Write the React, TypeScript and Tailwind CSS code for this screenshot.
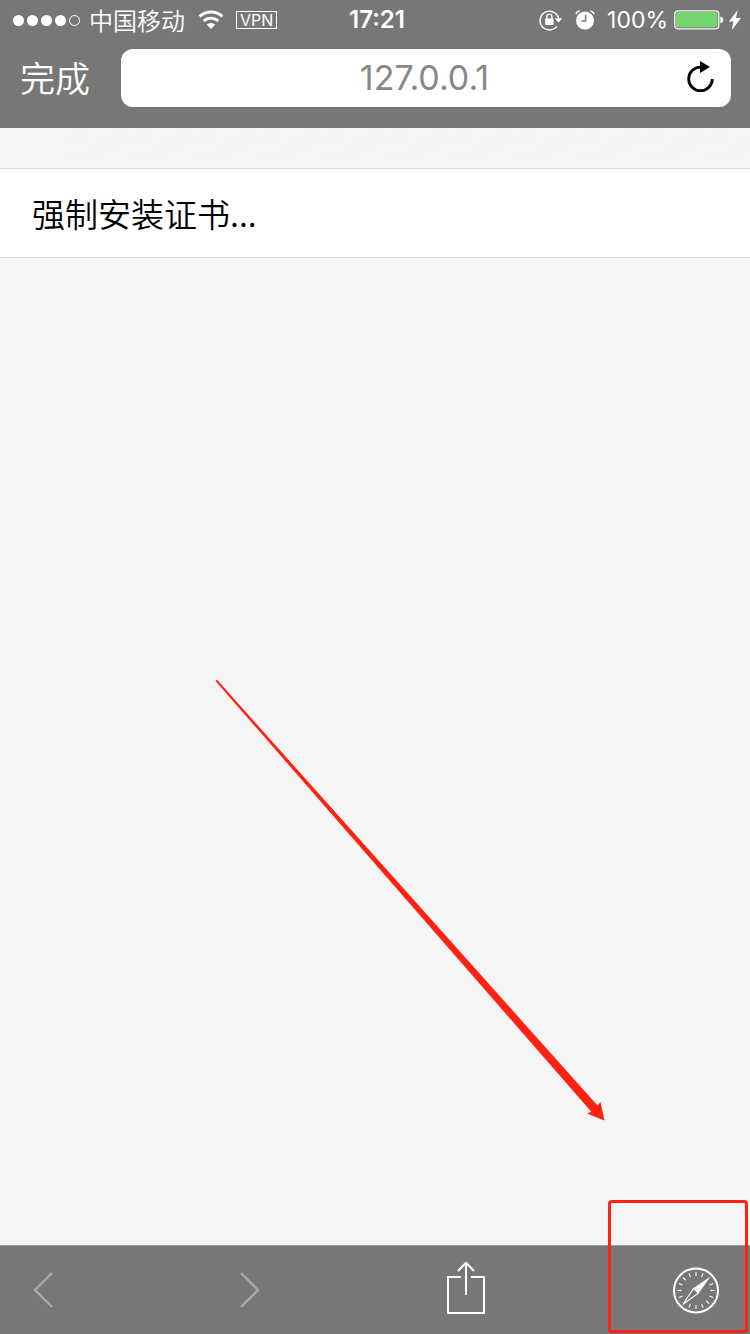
import React from "react";

const latin = "font-['Inter','Noto_Sans_CJK_SC',sans-serif]";
const cjk = "font-['Noto_Sans_CJK_SC',sans-serif]";

function Wifi() {
  return (
    <svg width="26" height="20" viewBox="0 0 26 20" fill="none" stroke="#fff" aria-hidden="true">
      <path d="M1.6 6.6a16.4 16.4 0 0 1 22.8 0" strokeWidth="2.8" />
      <path d="M5.8 11a10.4 10.4 0 0 1 14.4 0" strokeWidth="2.8" />
      <path d="M13 19l-4.2-4.4a6.2 6.2 0 0 1 8.4 0z" fill="#fff" stroke="none" />
    </svg>
  );
}

function RotationLock() {
  return (
    <svg width="24" height="22" viewBox="0 0 24 22" fill="none" stroke="#fff" aria-hidden="true">
      <path d="M17.8 17.4A9.4 9.4 0 1 1 19.6 9.4" strokeWidth="1.4" />
      <path d="M15.6 9.2h7.8l-3.9 4.2z" fill="#fff" stroke="none" />
      <rect x="6.2" y="9.6" width="8.4" height="6.4" rx="0.8" fill="#fff" stroke="none" />
      <path d="M7.9 10V7.6a2.5 2.5 0 0 1 5 0V10" strokeWidth="1.4" />
    </svg>
  );
}

function Alarm() {
  return (
    <svg width="20" height="20" viewBox="0 0 20 20" fill="none" aria-hidden="true">
      <circle cx="10" cy="10.6" r="9" fill="#fff" />
      <path d="M1 4.2Q1.6 1.4 4.8.9M19 4.2Q18.4 1.4 15.2.9" stroke="#fff" strokeWidth="1.3" />
      <path d="M10.6 5v6H6.4" stroke="#777" strokeWidth="1.5" />
    </svg>
  );
}

function Battery() {
  return (
    <svg width="50" height="20" viewBox="0 0 50 20" aria-hidden="true">
      <rect x="0.8" y="0.8" width="44" height="18" rx="3.2" fill="#666" stroke="#fff" strokeWidth="1.3" />
      <rect x="2" y="2" width="41.6" height="15.6" rx="2" fill="#75d572" />
      <path d="M46.3 6.4q3 .6 3 3.4t-3 3.4z" fill="#fff" />
    </svg>
  );
}

function Compass() {
  const ticks = Array.from({ length: 16 }, (_, i) => i * 22.5).filter((a) => a !== 45 && a !== 225);
  return (
    <svg width="48" height="48" viewBox="0 0 48 48" fill="none" stroke="#fff" aria-hidden="true">
      <circle cx="24" cy="24.5" r="22" strokeWidth="2" />
      {ticks.map((a) => (
        <path key={a} d="M24 6v4" strokeWidth="1.1" transform={`rotate(${a} 24 24.5)`} />
      ))}
      <path d="M38.5 10.5L21 22.5l5.5 5z" fill="#fff" stroke="none" />
      <path d="M21.6 22.4L10.8 38.5l15.4-11.3z" strokeWidth="1.1" />
    </svg>
  );
}

export default function App() {
  return (
    <div className={`relative flex min-h-screen flex-col overflow-hidden bg-[#f5f5f5] ${latin}`}>
      <header className="bg-[#777] text-white">
        <div className="grid h-10 grid-cols-[1fr_auto_1fr] items-center pl-3 pr-2">
          <div className="flex items-center">
            <svg width="70" height="12" viewBox="0 0 70 12" fill="#fff" aria-hidden="true">
              <circle cx="6.5" cy="6.5" r="5.5" />
              <circle cx="20.5" cy="6.5" r="5.5" />
              <circle cx="34.5" cy="6.5" r="5.5" />
              <circle cx="48.5" cy="6.5" r="5.5" />
              <circle cx="62.5" cy="6.5" r="5" fill="none" stroke="#fff" />
            </svg>
            <span className={`ml-[7px] text-2xl font-[350] ${cjk}`}>中国移动</span>
            <span className="ml-[13px]"><Wifi /></span>
            <span className="ml-3 border border-white px-[3px] text-base leading-4">VPN</span>
          </div>
          <time className="text-2xl font-semibold">17:21</time>
          <div className="flex items-center justify-end">
            <RotationLock />
            <span className="ml-3"><Alarm /></span>
            <span className="ml-3 text-[23px]">100%</span>
            <span className="ml-1.5"><Battery /></span>
            <svg className="ml-1" width="14" height="20" viewBox="0 0 14 20" fill="#fff" aria-hidden="true">
              <path d="M9.6 0L1 11.4h4.4L3.8 20 13 8H8z" />
            </svg>
          </div>
        </div>
        <div className="flex h-22 items-start pl-5 pr-[19px] pt-[9px]">
          <button type="button" className={`mr-[31px] shrink-0 text-[35px] leading-14 font-[350] ${cjk}`}>完成</button>
          <div className="flex h-[58px] min-w-0 flex-1 items-center rounded-xl bg-white pl-3 pr-[15px]">
            <span className="w-8 shrink-0" />
            <input
              aria-label="Address"
              defaultValue="127.0.0.1"
              className="w-full min-w-0 flex-1 bg-transparent text-center text-[34px] leading-10 text-[#888] outline-none"
            />
            <button type="button" aria-label="Reload" className="shrink-0">
              <svg width="32" height="36" viewBox="0 0 32 36" fill="none" aria-hidden="true">
                <path d="M16.5 7.1A11.8 11.8 0 1 0 28.3 18.9" stroke="#000" strokeWidth="2.8" />
                <path d="M16 1l10 6-10 6z" fill="#000" />
              </svg>
            </button>
          </div>
        </div>
      </header>

      <main className="flex-1">
        <svg className="block h-10 w-full" fill="none" stroke="#f1f1f1" aria-hidden="true">
          <defs>
            <pattern id="weave" width="64" height="40" patternUnits="userSpaceOnUse">
              <path d="M2 24l12 8 46-30M4 14l12-10 8 6M30 30l32-22" />
            </pattern>
          </defs>
          <rect x="64" width="100%" height="36" fill="url(#weave)" stroke="none" />
        </svg>
        <a
          href="#certificate"
          className={`block border-y border-[#dcdcdc] bg-white px-8 text-[33px] leading-[88px] font-[350] text-black ${cjk}`}
        >
          强制安装证书...
        </a>
      </main>

      <nav className="flex h-[89px] items-center justify-between border-t border-[#9a9a9a] bg-[#777] pl-8 pr-[30px]">
        <button type="button" aria-label="Back">
          <svg width="22" height="38" viewBox="0 0 22 38" fill="none" stroke="#aaa" strokeWidth="2.4" aria-hidden="true">
            <path d="M20 2L3 19l17 17" />
          </svg>
        </button>
        <button type="button" aria-label="Forward">
          <svg width="22" height="38" viewBox="0 0 22 38" fill="none" stroke="#aaa" strokeWidth="2.4" aria-hidden="true">
            <path d="M2 2l17 17L2 36" />
          </svg>
        </button>
        <button type="button" aria-label="Share">
          <svg width="40" height="56" viewBox="0 0 40 56" fill="none" stroke="#fff" strokeWidth="2" aria-hidden="true">
            <path d="M14 15H1v36h36V15H24" />
            <path d="M19 33V1M11 9l8-8.4L27 9" />
          </svg>
        </button>
        <button type="button" aria-label="Open in browser">
          <Compass />
        </button>
      </nav>

      <svg
        className="pointer-events-none absolute right-[144px] bottom-[212px]"
        width="392"
        height="444"
        viewBox="0 0 392 444"
        fill="#ff2112"
        aria-hidden="true"
      >
        <path d="M1.5 3L3 1.8 383.5 427.5l3-3.5L390.5 442.5 373 435.5l4.3-1.8z" />
      </svg>
      <div className="pointer-events-none absolute right-0.5 bottom-px h-[133px] w-[140px] rounded border-3 border-[#ff2112]" />
    </div>
  );
}
